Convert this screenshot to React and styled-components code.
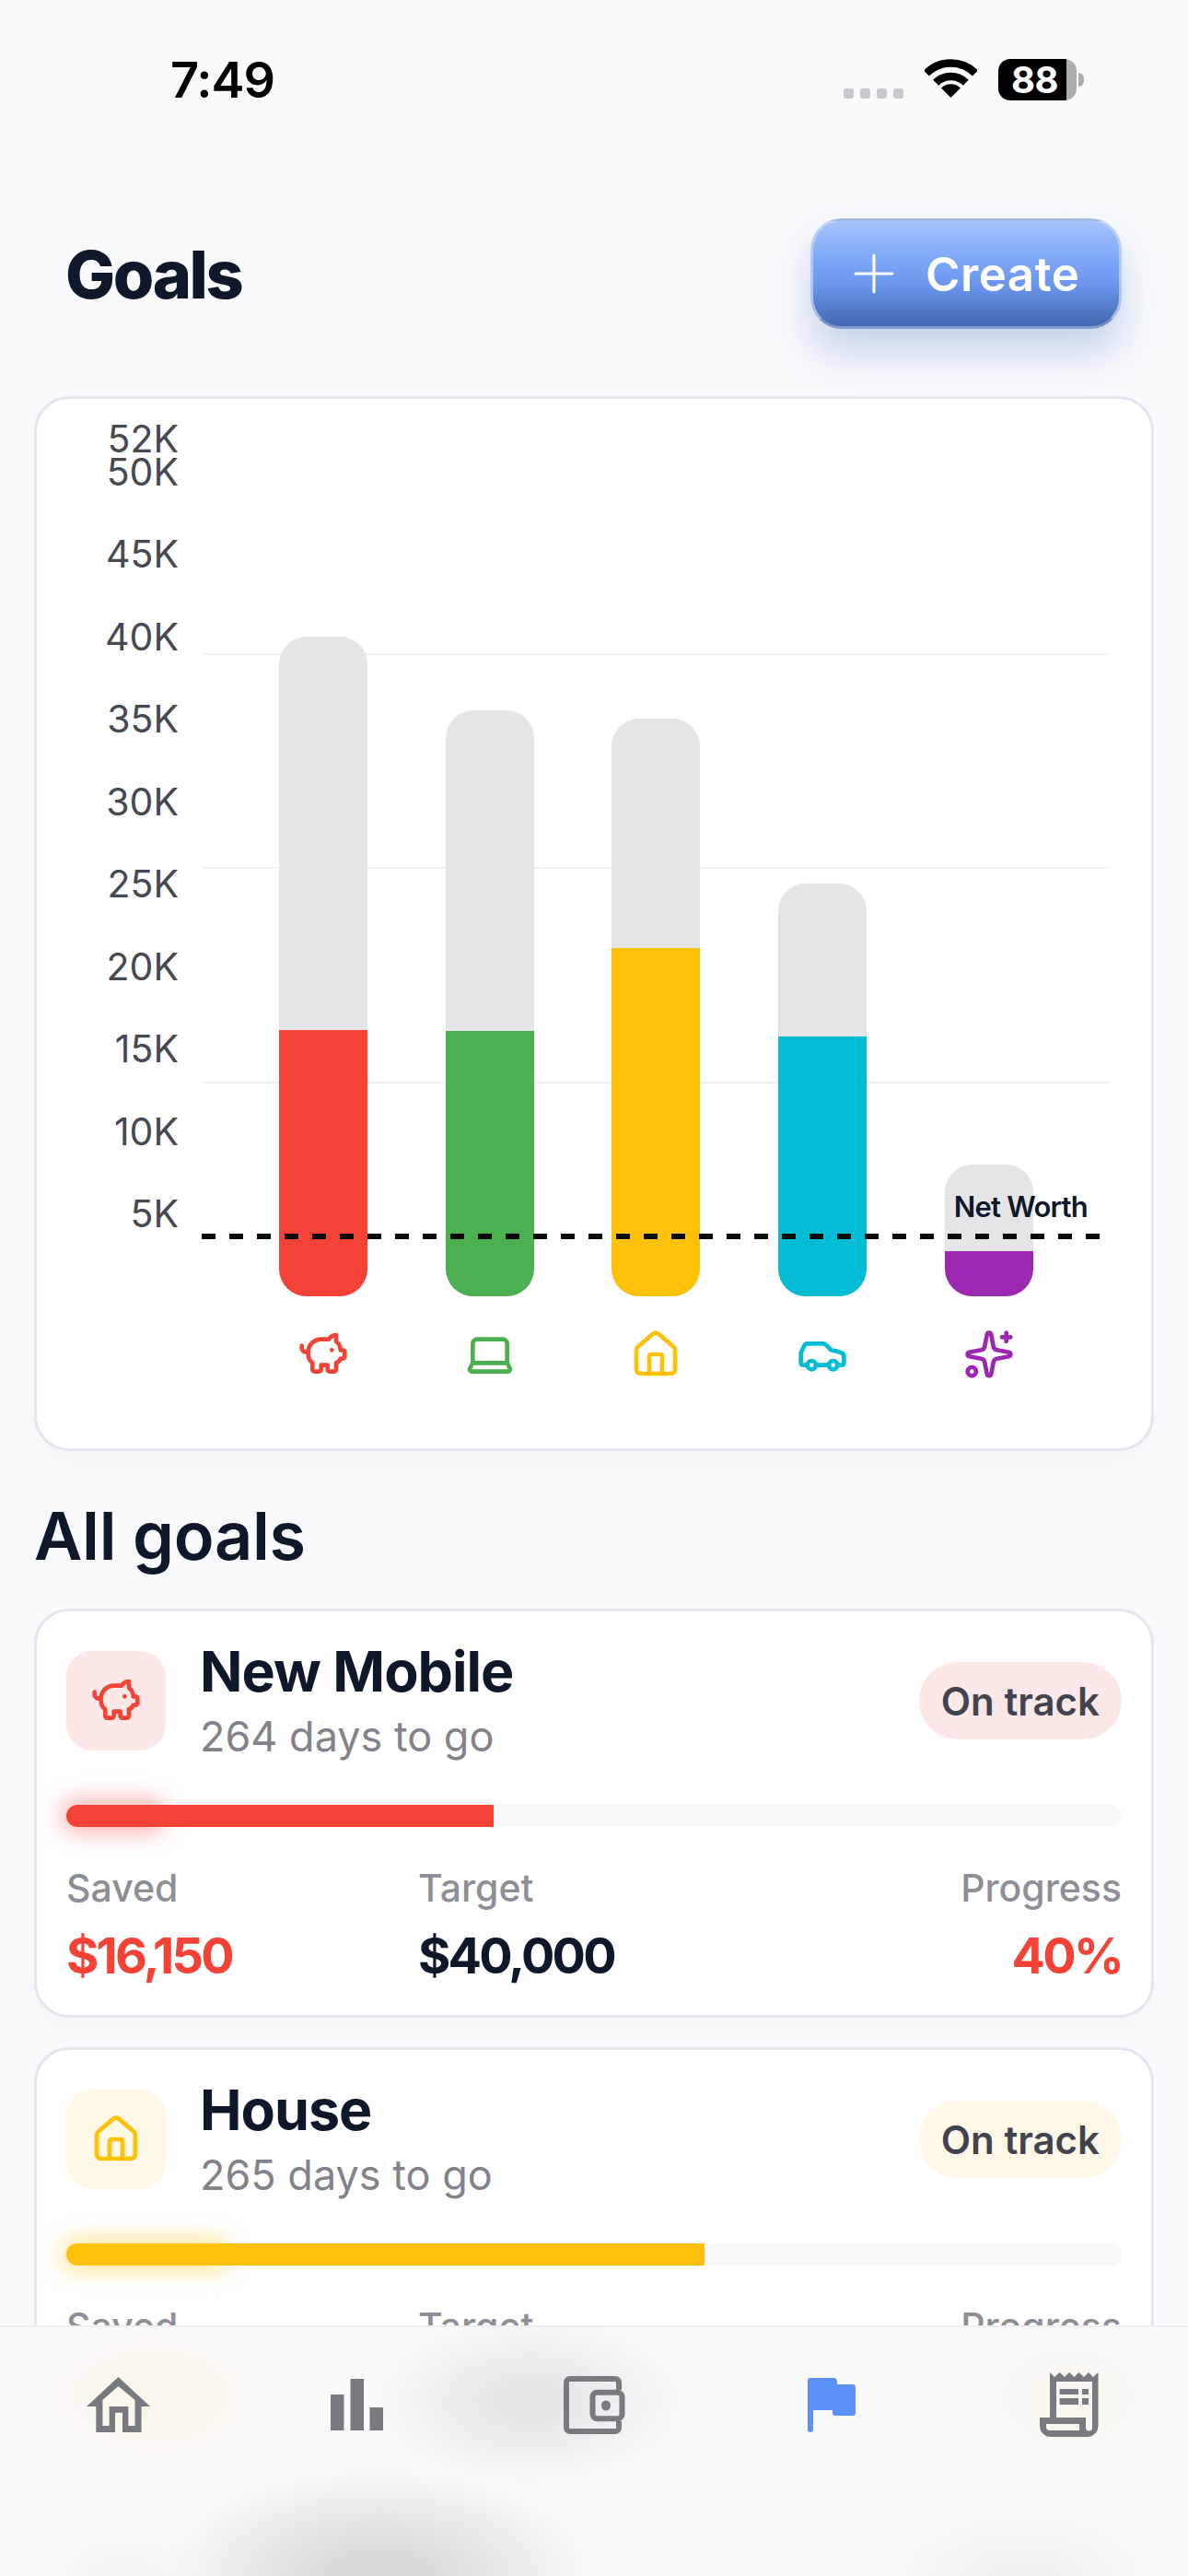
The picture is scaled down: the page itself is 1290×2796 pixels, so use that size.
import React from 'react'
import styled, { createGlobalStyle } from 'styled-components'
import { PiggyBank, Laptop, House, Car, Sparkles, Plus } from 'lucide-react'

const GlobalStyle = createGlobalStyle`
	html, body {
		margin: 0;
		padding: 0;
		height: 100%;
		overflow: hidden;
		background: #f8fafc;
		font-family: Inter, "Noto Sans", sans-serif;
		color: #0f172a;
	}
`
const Screen = styled.div`
	height: 100vh;
	overflow: hidden;
	padding: 0 37px;
	box-sizing: border-box;
`
const StatusBar = styled.div`
	display: flex;
	justify-content: space-between;
	height: 134px;
	margin: 0 -37px;
	padding: 56px 121px 0 185px;
	box-sizing: border-box;
`
const Time = styled.div`
	font-size: 54px;
	line-height: 62px;
	font-weight: 600;
	color: #000;
	letter-spacing: -1px;
`
const StatusIcons = styled.div`
	display: flex;
	align-items: flex-start;
	margin-top: 8px;
`
const SignalDots = styled.div`
	display: flex;
	gap: 7px;
	margin-top: 32px;
	margin-right: 23px;
`
const SignalDot = styled.div`
	width: 11px;
	height: 11px;
	border-radius: 3px;
	background: #c8c9cc;
`
const Battery = styled.div`
	position: relative;
	width: 85px;
	height: 45px;
	margin-left: 23px;
	border-radius: 13px;
	background: linear-gradient(90deg, #000 87%, #adadae 87%);
	color: #fff;
	font-size: 40px;
	line-height: 45px;
	font-weight: 700;
	padding-left: 14px;
	letter-spacing: -0.5px;
	box-sizing: border-box;
	&::after {
		content: '';
		position: absolute;
		left: 87px;
		top: 15px;
		width: 6px;
		height: 15px;
		border-radius: 0 8px 8px 0;
		background: #adadae;
	}
`
const Header = styled.div`
	display: flex;
	justify-content: space-between;
	align-items: center;
	margin-top: 103px;
	padding: 0 35px 0 34px;
	height: 120px;
`
const Title = styled.h1`
	margin: 0;
	font-size: 72px;
	font-weight: 800;
	letter-spacing: -2.4px;
`
const CreateButton = styled.button`
	display: flex;
	align-items: center;
	gap: 22px;
	width: 338px;
	height: 120px;
	padding: 0 0 0 32px;
	box-sizing: border-box;
	border-radius: 34px;
	border: 3px solid rgba(200, 215, 248, 0.75);
	border-bottom-color: rgba(130, 150, 200, 0.9);
	background: linear-gradient(180deg, #a6c3fa 0%, #7ba6f8 38%, #6a95ea 62%, #4266b0 100%);
	box-shadow: 0 26px 42px rgba(70, 110, 200, 0.28);
	color: #fff;
	font-family: inherit;
	font-size: 51px;
	font-weight: 600;
	letter-spacing: 0.5px;
`
const Card = styled.div`
	background: #fff;
	border: 3px solid #e0e7ef;
	border-radius: 38px;
	box-sizing: border-box;
	box-shadow: 0 12px 26px rgba(15, 23, 42, 0.025);
`
const ChartCard = styled(Card)`
	margin-top: 73px;
	height: 1145px;
	padding-top: 43px;
`
const Plot = styled.div`
	position: relative;
	height: 931px;
	padding-left: 263px;
	box-sizing: border-box;
	display: flex;
	align-items: flex-end;
	gap: 84.7px;
`
const AxisLabel = styled.div`
	position: absolute;
	right: calc(100% - 154px);
	transform: translateY(-50%);
	font-size: 41px;
	line-height: 44px;
	color: #454952;
`
const GridLine = styled.div`
	position: absolute;
	left: 180px;
	width: 985px;
	height: 2px;
	background: #eff1f4;
`
const NetWorthLine = styled.div`
	position: absolute;
	left: 179px;
	width: 976px;
	height: 6px;
	top: 863px;
	background: repeating-linear-gradient(90deg, #0a0a0a 0 15px, transparent 15px 30px);
`
const NetWorthLabel = styled.div`
	position: absolute;
	right: 69px;
	top: 816px;
	font-size: 31px;
	line-height: 36px;
	font-weight: 600;
	letter-spacing: -0.8px;
`
const BarTrack = styled.div`
	position: relative;
	width: 96px;
	border-radius: 30px;
	background: #e5e5e7;
	overflow: hidden;
`
const BarFill = styled.div`
	position: absolute;
	left: 0;
	right: 0;
	bottom: 0;
	background: ${(props) => props.$color};
`
const IconRow = styled.div`
	display: flex;
	gap: 84.7px;
	padding-left: 263px;
	margin-top: 35px;
`
const IconCell = styled.div`
	width: 96px;
	display: flex;
	justify-content: center;
	color: ${(props) => props.$color};
`
const SectionTitle = styled.h2`
	margin: 49px 0 36px;
	font-size: 72px;
	line-height: 86px;
	font-weight: 600;
	letter-spacing: -0.3px;
`
const GoalList = styled.div`
	display: flex;
	flex-direction: column;
	gap: 32px;
`
const GoalCard = styled(Card)`
	height: 444px;
	padding: 43px 32px 0;
`
const GoalTop = styled.div`
	display: flex;
	align-items: flex-start;
	gap: 37px;
`
const GoalIcon = styled.div`
	width: 108px;
	height: 108px;
	border-radius: 28px;
	flex-shrink: 0;
	display: flex;
	align-items: center;
	justify-content: center;
	background: ${(props) => props.$tint};
	color: ${(props) => props.$color};
`
const GoalText = styled.div`
	flex: 1;
	margin-top: -14px;
`
const GoalName = styled.div`
	font-size: 61px;
	line-height: 72px;
	font-weight: 700;
	letter-spacing: -1px;
`
const GoalDays = styled.div`
	margin-top: 9px;
	font-size: 45px;
	line-height: 52px;
	color: #82838a;
`
const StatusBadge = styled.div`
	height: 84px;
	margin-top: 12px;
	padding: 0 24px;
	border-radius: 42px;
	display: flex;
	align-items: center;
	font-size: 42px;
	font-weight: 600;
	color: #3f4450;
	background: ${(props) => props.$tint};
`
const ProgressTrack = styled.div`
	position: relative;
	height: 24px;
	margin-top: 48px;
	border-radius: 12px;
	background: #f7f8fa;
`
const ProgressGlow = styled.div`
	position: absolute;
	left: 0;
	top: 0;
	bottom: 0;
	border-radius: 12px;
	box-shadow: 0 0 24px 6px ${(props) => props.$color}66;
`
const ProgressFill = styled.div`
	position: relative;
	height: 100%;
	border-radius: 12px 0 0 12px;
	background: ${(props) => props.$color};
`
const StatGrid = styled.div`
	display: grid;
	grid-template-columns: 382px 1fr auto;
	margin-top: 42px;
`
const Stat = styled.div`
	text-align: ${(props) => (props.$right ? 'right' : 'left')};
`
const StatLabel = styled.div`
	font-size: 41px;
	line-height: 48px;
	font-weight: 500;
	color: #8e8f96;
`
const StatValue = styled.div`
	margin-top: 18px;
	font-size: 54px;
	line-height: 64px;
	font-weight: 700;
	letter-spacing: -2.8px;
	color: ${(props) => props.$color || '#0f172a'};
`
const BottomNav = styled.nav`
	position: fixed;
	left: 0;
	right: 0;
	bottom: 0;
	height: 272px;
	box-sizing: border-box;
	display: grid;
	grid-template-columns: repeat(5, 1fr);
	align-items: start;
	padding-top: 48px;
	border-top: 2px solid #eceef1;
	background: #fafafa;
	overflow: hidden;
`
const NavSmudge = styled.div`
	position: absolute;
	left: ${(props) => props.$x}px;
	top: ${(props) => props.$y}px;
	width: ${(props) => props.$w}px;
	height: ${(props) => props.$h}px;
	background: radial-gradient(closest-side, ${(props) => props.$color} 20%, transparent);
`
const NavItem = styled.div`
	position: relative;
	height: 72px;
	display: flex;
	align-items: center;
	justify-content: center;
	color: ${(props) => (props.$active ? '#5b92f8' : '#797a80')};
`

const ICON_PX = 56
const PX_PER_K = 17.91
const PLOT_H = 931
const toY = (k) => PLOT_H - k * PX_PER_K

const axis = [52, 50, 45, 40, 35, 30, 25, 20, 15, 10, 5]
const gridLines = [39, 26, 13]

const bars = [
	{ target: 40, saved: 16.15, color: '#f44336', Icon: PiggyBank },
	{ target: 35.5, saved: 16.1, color: '#4caf50', Icon: Laptop },
	{ target: 35, saved: 21.1, color: '#ffc107', Icon: House },
	{ target: 25, saved: 15.75, color: '#00bcd4', Icon: Car },
	{ target: 8, saved: 2.75, color: '#9c27b0', Icon: Sparkles },
]

const goals = [
	{
		name: 'New Mobile',
		days: '264 days to go',
		saved: '$16,150',
		target: '$40,000',
		percent: 40.5,
		glow: 9,
		color: '#f44336',
		tint: '#fde8e7',
		Icon: PiggyBank,
	},
	{
		name: 'House',
		days: '265 days to go',
		saved: '$21,000',
		target: '$35,000',
		percent: 60.5,
		glow: 15,
		color: '#ffc107',
		tint: '#fff8e6',
		Icon: House,
	},
]

const smudges = [
	{ x: 10, y: -20, w: 310, h: 190, color: '#fbf6ec' },
	{ x: 400, y: -15, w: 350, h: 190, color: '#e5e6e8' },
	{ x: 1030, y: -20, w: 260, h: 190, color: '#f8f6ee' },
	{ x: 170, y: 150, w: 480, h: 240, color: '#d8d9db' },
	{ x: 950, y: 190, w: 320, h: 170, color: '#f0f1ee' },
	{ x: 40, y: 210, w: 190, h: 130, color: '#f3f4f2' },
]

const WifiIcon = () => (
	<svg width="57" height="42" viewBox="0 0 57 42" fill="none" stroke="#000" strokeWidth="8.5">
		<path d="M2 15.5A37.5 37.5 0 0 1 55 15.5" />
		<path d="M12.2 25.7A23 23 0 0 1 44.8 25.7" />
		<path d="M28.5 42L18 31.5A15 15 0 0 1 39 31.5Z" fill="#000" stroke="none" />
	</svg>
)

const HomeNavIcon = () => (
	<svg width="70" height="60" viewBox="0 0 70 60" fill="currentColor" fillRule="evenodd">
		<path d="M34.5 0L69 32H59.6V60H39V38.7H31V60H10.3V32H0ZM34.5 10L17.4 25V53H24.6V32H45.3V53H52.5V25Z" />
	</svg>
)

const StatsNavIcon = () => (
	<svg width="57" height="56" viewBox="0 0 57 56" fill="currentColor">
		<rect x="0" y="17" width="14.5" height="39" />
		<rect x="21.5" y="0" width="14.5" height="56" />
		<rect x="42.5" y="31" width="14.5" height="25" />
	</svg>
)

const WalletNavIcon = () => (
	<svg width="67" height="63" viewBox="0 0 67 63" fill="none" stroke="currentColor" strokeWidth="6">
		<path d="M60 15V7a4 4 0 0 0-4-4H7a4 4 0 0 0-4 4V56a4 4 0 0 0 4 4H56a4 4 0 0 0 4-4V49" />
		<rect x="31.5" y="17.7" width="32" height="28.6" rx="5" />
		<ellipse cx="46" cy="32" rx="5" ry="5.5" fill="currentColor" stroke="none" />
	</svg>
)

const FlagNavIcon = () => (
	<svg width="52" height="59" viewBox="0 0 52 59" fill="currentColor">
		<path d="M0 3a3 3 0 0 1 3-3H28a4 4 0 0 1 4 4V7H49a3 3 0 0 1 3 3V38a3 3 0 0 1-3 3H30a3 3 0 0 1-3-3V35H6V56a3 3 0 0 1-6 0Z" />
	</svg>
)

const ReceiptNavIcon = () => (
	<svg width="64" height="70" viewBox="0 0 64 70" fill="currentColor" fillRule="evenodd">
		<path d="M11 0L16 5L21.5 0L27 5L32 0L37.5 5L42.5 0L48 5L53 0L58 5L63.5 0V58a12 12 0 0 1-12 12H12a12 12 0 0 1-12-12V49H11ZM18 10V49H50V60a3.5 3.5 0 0 0 7 0V10ZM7 56V59a4 4 0 0 0 4 4H43V56Z" />
		<rect x="21.6" y="18" width="20.4" height="6" />
		<rect x="46" y="18" width="7" height="6" />
		<rect x="21.6" y="28" width="20.4" height="7" />
		<rect x="46" y="28" width="7" height="7" />
	</svg>
)

const App = () => {
	return (
		<Screen>
			<GlobalStyle />
			<StatusBar>
				<Time>7:49</Time>
				<StatusIcons>
					<SignalDots>
						<SignalDot />
						<SignalDot />
						<SignalDot />
						<SignalDot />
					</SignalDots>
					<WifiIcon />
					<Battery>88</Battery>
				</StatusIcons>
			</StatusBar>

			<Header>
				<Title>Goals</Title>
				<CreateButton>
					<Plus size={68} strokeWidth={1.1} />
					Create
				</CreateButton>
			</Header>

			<ChartCard>
				<Plot>
					{gridLines.map((k) => (
						<GridLine key={k} style={{ top: toY(k) }} />
					))}
					{axis.map((k) => (
						<AxisLabel key={k} style={{ top: toY(k) }}>
							{k}K
						</AxisLabel>
					))}
					{bars.map((bar) => (
						<BarTrack key={bar.color} style={{ height: bar.target * PX_PER_K }}>
							<BarFill $color={bar.color} style={{ height: bar.saved * PX_PER_K }} />
						</BarTrack>
					))}
					<NetWorthLine />
					<NetWorthLabel>Net Worth</NetWorthLabel>
				</Plot>
				<IconRow>
					{bars.map(({ color, Icon }) => (
						<IconCell key={color} $color={color}>
							<Icon size={ICON_PX} strokeWidth={2} />
						</IconCell>
					))}
				</IconRow>
			</ChartCard>

			<SectionTitle>All goals</SectionTitle>

			<GoalList>
				{goals.map((goal) => (
					<GoalCard key={goal.name}>
						<GoalTop>
							<GoalIcon $tint={goal.tint} $color={goal.color}>
								<goal.Icon size={ICON_PX} strokeWidth={2} />
							</GoalIcon>
							<GoalText>
								<GoalName>{goal.name}</GoalName>
								<GoalDays>{goal.days}</GoalDays>
							</GoalText>
							<StatusBadge $tint={goal.tint}>On track</StatusBadge>
						</GoalTop>
						<ProgressTrack>
							<ProgressGlow $color={goal.color} style={{ width: `${goal.glow}%` }} />
							<ProgressFill $color={goal.color} style={{ width: `${goal.percent}%` }} />
						</ProgressTrack>
						<StatGrid>
							<Stat>
								<StatLabel>Saved</StatLabel>
								<StatValue $color={goal.color}>{goal.saved}</StatValue>
							</Stat>
							<Stat>
								<StatLabel>Target</StatLabel>
								<StatValue>{goal.target}</StatValue>
							</Stat>
							<Stat $right>
								<StatLabel>Progress</StatLabel>
								<StatValue $color={goal.color}>{Math.floor(goal.percent)}%</StatValue>
							</Stat>
						</StatGrid>
					</GoalCard>
				))}
			</GoalList>

			<BottomNav>
				{smudges.map((smudge) => (
					<NavSmudge
						key={smudge.color}
						$x={smudge.x}
						$y={smudge.y}
						$w={smudge.w}
						$h={smudge.h}
						$color={smudge.color}
					/>
				))}
				<NavItem>
					<HomeNavIcon />
				</NavItem>
				<NavItem>
					<StatsNavIcon />
				</NavItem>
				<NavItem>
					<WalletNavIcon />
				</NavItem>
				<NavItem $active>
					<FlagNavIcon />
				</NavItem>
				<NavItem>
					<ReceiptNavIcon />
				</NavItem>
			</BottomNav>
		</Screen>
	)
}

export default App
